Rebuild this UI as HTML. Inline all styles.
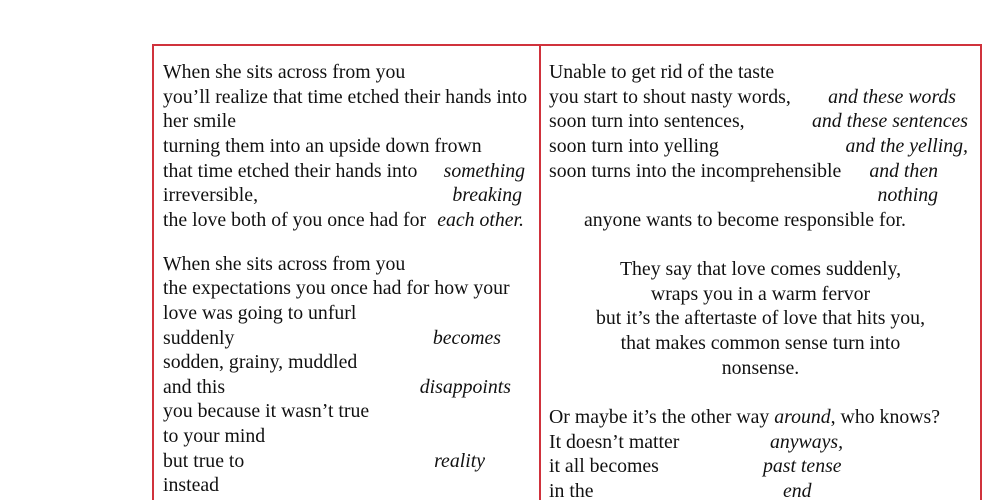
<!DOCTYPE html>
<html><head><meta charset="utf-8"><style>
html,body{margin:0;padding:0;background:#fff;width:1000px;height:500px;overflow:hidden;position:relative}
body{font-family:"Liberation Serif","Times New Roman",serif;font-size:19.8px;color:#111}
.box{position:absolute;left:152px;top:44px;width:826px;height:470px;border:2px solid #d0323c;}
.div{position:absolute;left:539px;top:45px;width:2px;height:470px;background:#d0323c}
.l{position:absolute;line-height:24px;white-space:nowrap}
i{font-style:italic}
.c{text-align:center;width:441px;left:540px}
</style></head><body>
<div class="box"></div><div class="div"></div>
<div class="l" style="left:163px;top:60px">When she sits across from you</div>
<div class="l" style="left:163px;top:85px">you’ll realize that time etched their hands into</div>
<div class="l" style="left:163px;top:109px">her smile</div>
<div class="l" style="left:163px;top:134px">turning them into an upside down frown</div>
<div class="l" style="left:163px;top:159px">that time etched their hands into</div>
<div class="l" style="right:475px;top:159px"><i>something</i></div>
<div class="l" style="left:163px;top:183px">irreversible,</div>
<div class="l" style="right:478px;top:183px"><i>breaking</i></div>
<div class="l" style="left:163px;top:208px">the love both of you once had for</div>
<div class="l" style="right:476px;top:208px"><i>each other.</i></div>

<div class="l" style="left:163px;top:252px">When she sits across from you</div>
<div class="l" style="left:163px;top:276px">the expectations you once had for how your</div>
<div class="l" style="left:163px;top:301px">love was going to unfurl</div>
<div class="l" style="left:163px;top:326px">suddenly</div>
<div class="l" style="right:499px;top:326px"><i>becomes</i></div>
<div class="l" style="left:163px;top:350px">sodden, grainy, muddled</div>
<div class="l" style="left:163px;top:375px">and this</div>
<div class="l" style="right:489px;top:375px"><i>disappoints</i></div>
<div class="l" style="left:163px;top:399px">you because it wasn’t true</div>
<div class="l" style="left:163px;top:424px">to your mind</div>
<div class="l" style="left:163px;top:449px">but true to</div>
<div class="l" style="right:515px;top:449px"><i>reality</i></div>
<div class="l" style="left:163px;top:473px">instead</div>

<div class="l" style="left:549px;top:60px">Unable to get rid of the taste</div>
<div class="l" style="left:549px;top:85px">you start to shout nasty words,</div>
<div class="l" style="right:44px;top:85px"><i>and these words</i></div>
<div class="l" style="left:549px;top:109px">soon turn into sentences,</div>
<div class="l" style="right:32px;top:109px"><i>and these sentences</i></div>
<div class="l" style="left:549px;top:134px">soon turn into yelling</div>
<div class="l" style="right:32px;top:134px"><i>and the yelling,</i></div>
<div class="l" style="left:549px;top:159px">soon turns into the incomprehensible</div>
<div class="l" style="right:62px;top:159px"><i>and then</i></div>
<div class="l" style="right:62px;top:183px"><i>nothing</i></div>
<div class="l" style="left:584px;top:208px">anyone wants to become responsible for.</div>

<div class="l c" style="top:257px">They say that love comes suddenly,</div>
<div class="l c" style="top:282px">wraps you in a warm fervor</div>
<div class="l c" style="top:306px">but it’s the aftertaste of love that hits you,</div>
<div class="l c" style="top:331px">that makes common sense turn into</div>
<div class="l c" style="top:356px">nonsense.</div>

<div class="l" style="left:549px;top:405px">Or maybe it’s the other way <i>around</i>, who knows?</div>
<div class="l" style="left:549px;top:430px">It doesn’t matter</div>
<div class="l" style="left:770px;top:430px"><i>anyways,</i></div>
<div class="l" style="left:549px;top:454px">it all becomes</div>
<div class="l" style="left:763px;top:454px"><i>past tense</i></div>
<div class="l" style="left:549px;top:479px">in the</div>
<div class="l" style="left:783px;top:479px"><i>end</i></div>
</body></html>
